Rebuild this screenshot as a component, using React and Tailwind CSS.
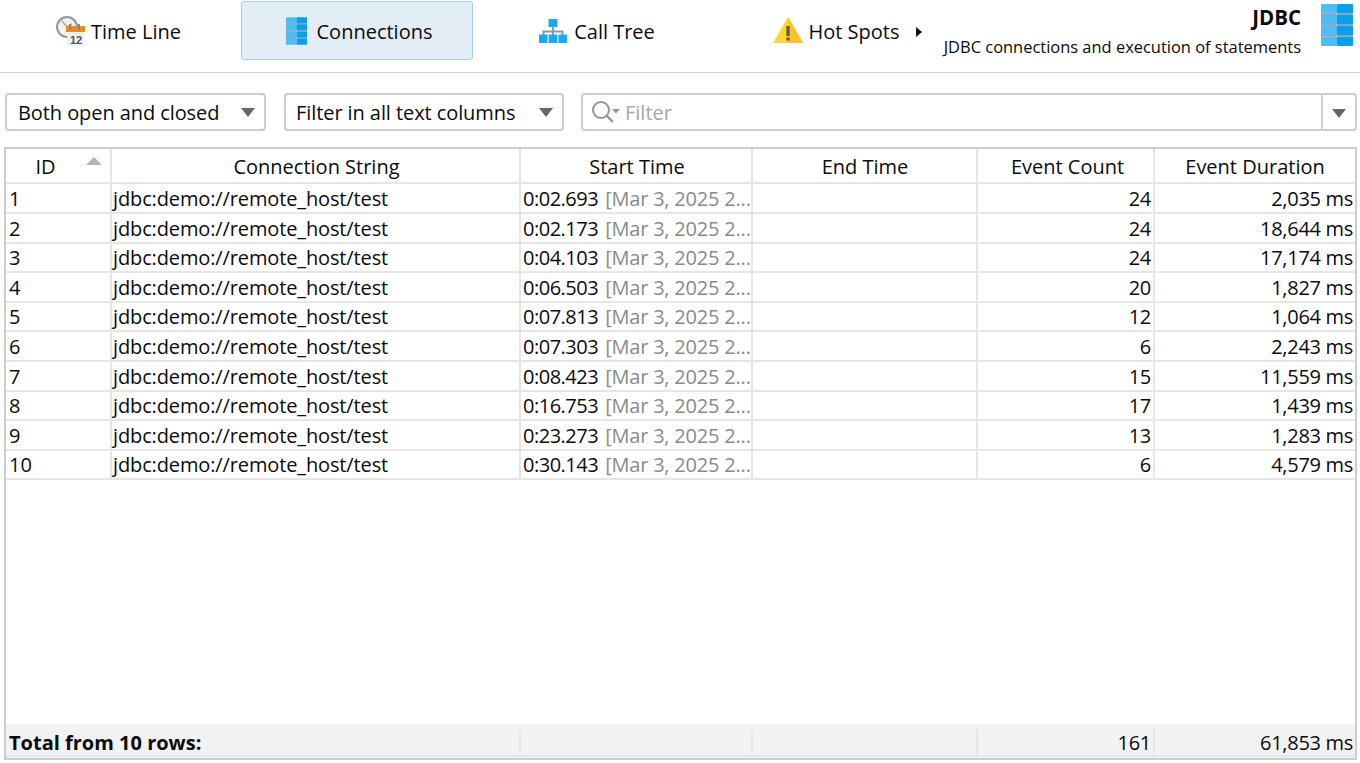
const FONT = "font-['Open_Sans','Noto_Sans',sans-serif]";

const rows = [
  [1, "0:02.693", 24, "2,035 ms"],
  [2, "0:02.173", 24, "18,644 ms"],
  [3, "0:04.103", 24, "17,174 ms"],
  [4, "0:06.503", 20, "1,827 ms"],
  [5, "0:07.813", 12, "1,064 ms"],
  [6, "0:07.303", 6, "2,243 ms"],
  [7, "0:08.423", 15, "11,559 ms"],
  [8, "0:16.753", 17, "1,439 ms"],
  [9, "0:23.273", 13, "1,283 ms"],
  [10, "0:30.143", 6, "4,579 ms"],
];

const COLS = "grid grid-cols-[106px_409px_232px_225px_177px_200px]";
const HEADERS = [
  ["ID", "pr-[25px]"],
  ["Connection String", "pl-[2px]"],
  ["Start Time", "pl-[2px]"],
  ["End Time", "pl-[1px]"],
  ["Event Count", "pl-[4px]"],
  ["Event Duration", ""],
];

function DbIcon({ className, line }) {
  return (
    <svg viewBox="0 0 32 42" className={className}>
      {[0, 10.8, 21.6, 32.4].map((y) => (
        <g key={y}>
          <rect x="0" y={y} width="16" height="9.6" rx="1" fill="#4fbdf5" />
          <rect x="16" y={y} width="16" height="9.6" rx="1" fill="#0a9fe8" />
        </g>
      ))}
      <rect x="0" y="9.6" width="32" height="1.2" fill={line} />
      <rect x="0" y="20.4" width="32" height="1.2" fill={line} />
      <rect x="0" y="31.2" width="32" height="1.2" fill={line} />
    </svg>
  );
}

function TimeIcon() {
  return (
    <svg viewBox="0 0 30 30" className="w-[30px] h-[30px]">
      <circle cx="11" cy="11" r="10" fill="#f1f2f3" stroke="#8b979f" strokeWidth="2" />
      <path d="M11 11 L6 5 M11 11 L16 8" stroke="#e8a33d" strokeWidth="1.6" fill="none" />
      <rect x="11" y="15" width="17" height="15" fill="#eef0f1" />
      <rect x="10" y="10" width="19" height="6" fill="#f08a1d" />
      <path d="M14 8 v6 M23 8 v6" stroke="#7c8890" strokeWidth="2" />
      <text x="20" y="28" textAnchor="middle" fontSize="11" fontWeight="700" fill="#4b5560" fontFamily="Liberation Sans">12</text>
    </svg>
  );
}

function TreeIcon() {
  return (
    <svg viewBox="0 0 28 24" className="w-[28px] h-[24px]">
      <path d="M14 8 V16 M4.5 16 V12.5 H23.5 V16" stroke="#8a9aa5" strokeWidth="2" fill="none" />
      <rect x="9.5" y="0" width="9" height="8" fill="#1da7ec" />
      <rect x="0" y="15.5" width="8.6" height="8.5" fill="#1da7ec" />
      <rect x="9.7" y="15.5" width="8.6" height="8.5" fill="#1da7ec" />
      <rect x="19.4" y="15.5" width="8.6" height="8.5" fill="#1da7ec" />
    </svg>
  );
}

function WarnIcon() {
  return (
    <svg viewBox="0 0 30 27" className="w-[30px] h-[27px]">
      <path d="M15 0 L30 26 H0 Z" fill="#ffd633" />
      <path d="M15 0 L30 26 H15 Z" fill="#fbc02d" />
      <rect x="13.4" y="9" width="3.2" height="10" fill="#5f5a45" />
      <rect x="13.4" y="20.5" width="3.2" height="3" fill="#5f5a45" />
    </svg>
  );
}

function Caret() {
  return <span className="w-0 h-0 border-l-[7.5px] border-r-[7.5px] border-t-[9px] border-l-transparent border-r-transparent border-t-[#666666]" />;
}

function Tab({ icon, label, active, extra }) {
  return (
    <div className={`w-[232px] h-[59px] mt-px flex items-center justify-center rounded-[3px] border ${extra} ${active ? "bg-[#e3edf6] border-[#abcde3]" : "border-transparent"}`}>
      {icon}
      <span className="pt-[3px]">{label}</span>
    </div>
  );
}

function Select({ label, className }) {
  return (
    <div className={`${className} h-[38px] flex items-center justify-between pr-[9px] bg-white rounded-[4px] border-2 border-[#cccccc]`}>
      <span className="pt-[1px] tracking-[-0.08px]">{label}</span>
      <Caret />
    </div>
  );
}

export default function App() {
  return (
    <div className={`${FONT} w-[1360px] h-[763px] bg-white overflow-hidden text-[20px] leading-[26px] text-[#0b0b0b] flex flex-col`}>
      <div className="h-[73px] shrink-0 border-b border-[#d2d2d2] flex pl-px">
        <div className="flex gap-2 shrink-0 mr-[-20px]">
          <Tab icon={<TimeIcon />} label="Time Line" extra="gap-[5px] pl-[3px]" />
          <Tab icon={<DbIcon className="w-[21px] h-[28px]" line="#3f93c4" />} label="Connections" active extra="gap-[10px] pl-[4px]" />
          <Tab icon={<TreeIcon />} label="Call Tree" extra="gap-[7px]" />
          <div className="relative w-[232px] h-[59px] mt-px flex items-center justify-center gap-[6px] pr-[2px]">
            <WarnIcon />
            <span className="pt-[3px]">Hot Spots</span>
            <span className="absolute left-[195px] top-[26px] w-0 h-0 border-y-[5px] border-l-[6px] border-y-transparent border-l-[#111111]" />
          </div>
        </div>
        <div className="flex-1 min-w-0 flex justify-end pr-[7px]">
          <div className="flex flex-col items-end pt-[4px] pr-[20px] whitespace-nowrap">
            <span className="font-bold text-[20.5px] leading-[26px]">JDBC</span>
            <span className="text-[16.45px] leading-[22px] mt-[6px]">JDBC connections and execution of statements</span>
          </div>
          <DbIcon className="w-[32px] h-[42px] mt-[4px] shrink-0" line="#7f8c96" />
        </div>
      </div>

      <div className="flex pl-[5px] pt-[20px] h-[74px] shrink-0">
        <Select label="Both open and closed" className="w-[261px] mr-[18px] pl-[11px]" />
        <Select label="Filter in all text columns" className="w-[280px] mr-[17px] pl-[10px]" />
        <div className="w-[776px] h-[38px] flex items-stretch rounded-[4px] border-2 border-[#cccccc]">
          <div className="flex-1 flex items-center pl-[8px]">
            <svg viewBox="0 0 32 24" className="w-[32px] h-[24px]">
              <circle cx="10" cy="10" r="8" fill="none" stroke="#8f979d" strokeWidth="2" />
              <path d="M15.5 15.5 L22 22" stroke="#8f979d" strokeWidth="2.4" />
              <path d="M21 9 h8 l-4 4.5 z" fill="#8f979d" />
            </svg>
            <span className="text-[#a3a9af] ml-[2px] pt-[1px]">Filter</span>
          </div>
          <div className="w-[34px] flex items-center justify-center border-l-2 border-[#cccccc] pt-[2px]">
            <Caret />
          </div>
        </div>
      </div>

      <div className="w-[1353px] h-[613px] ml-[4px] border-2 border-[#cccccc] flex flex-col">
        <div className={`${COLS} h-[35px] shrink-0`}>
          {HEADERS.map(([h, pad], i) => (
            <div key={h} className={`relative flex items-center justify-center pt-[2px] border-b-2 border-[#e6e6e6] ${i < 5 ? "border-r-2" : ""} border-r-[#e6e6e6] ${pad}`}>
              {h}
              {i === 0 && <span className="absolute right-[8px] top-[8px] w-0 h-0 border-l-[8px] border-r-[8px] border-b-[8px] border-l-transparent border-r-transparent border-b-[#b4b4b4]" />}
            </div>
          ))}
        </div>
        {rows.map(([id, t, c, d]) => (
          <div key={id} className={`${COLS} h-[29.6px] shrink-0`}>
            <div className="pl-[3px] pt-[2px] flex items-center border-r-2 border-b-2 border-[#e6e6e6]">{id}</div>
            <div className="pl-[1px] pt-[2px] flex items-center border-r-2 border-b-2 border-[#e6e6e6] tracking-[-0.13px]">jdbc:demo://remote_host/test</div>
            <div className="pl-[2px] pt-[2px] flex items-center border-r-2 border-b-2 border-[#e6e6e6] whitespace-nowrap">
              <span className="tracking-[-0.5px]">{t}</span>
              <span className="text-[#8a8a8a] ml-[7px] tracking-[-0.2px]">[Mar 3, 2025 2...</span>
            </div>
            <div className="border-r-2 border-b-2 border-[#e6e6e6]" />
            <div className="pr-[2px] pt-[2px] flex items-center justify-end border-r-2 border-b-2 border-[#e6e6e6] tracking-[-0.3px]">{c}</div>
            <div className="pr-[2px] pt-[2px] flex items-center justify-end border-b-2 border-[#e6e6e6] tracking-[-0.3px]">{d}</div>
          </div>
        ))}
        <div className="flex-1" />
        <div className="h-[34px] shrink-0 bg-[#f2f2f2] pt-[6px]">
          <div className={`${COLS} h-[27px] border-b-2 border-[#e6e6e6]`}>
            <div className="col-span-2 pl-[3px] pb-[1px] font-bold flex items-center border-r-2 border-[#e6e6e6] whitespace-nowrap">Total from 10 rows:</div>
            <div className="border-r-2 border-[#e6e6e6]" />
            <div className="border-r-2 border-[#e6e6e6]" />
            <div className="pr-[2px] pb-[1px] flex items-center justify-end border-r-2 border-[#e6e6e6] tracking-[-0.3px]">161</div>
            <div className="pr-[2px] pb-[1px] flex items-center justify-end tracking-[-0.3px]">61,853 ms</div>
          </div>
        </div>
      </div>
    </div>
  );
}
